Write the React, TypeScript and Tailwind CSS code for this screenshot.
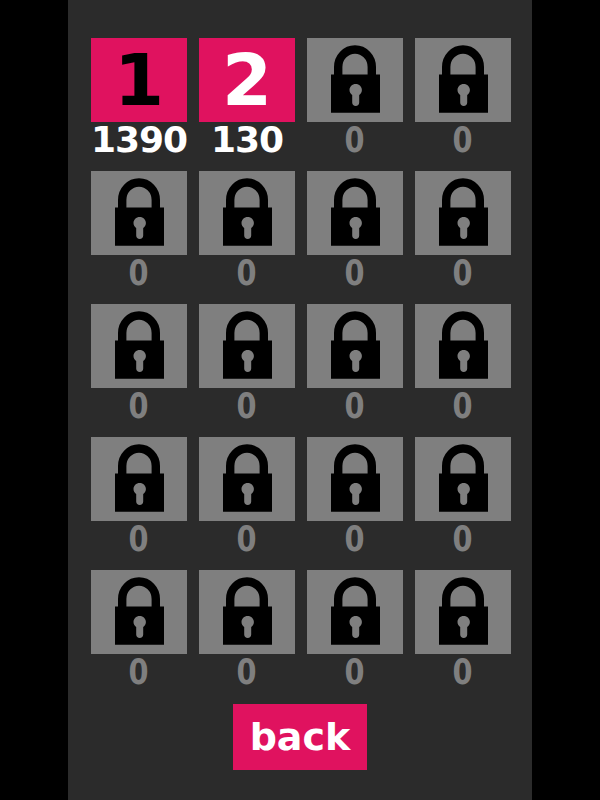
const LEVEL_COUNT = 20;

const unlocked: Record<number, { score: string; numberClass: string }> = {
  1: { score: '1390', numberClass: 'text-black' },
  2: { score: '130', numberClass: 'text-white' }
};

function LockIcon() {
  return (
    <svg className="block h-[84px] w-[96px]" viewBox="0 0 96 84" fill="none">
      <path d="M31.2 38V29A16.8 17.5 0 0 1 64.8 29V38" stroke="#000" strokeWidth="8.4" />
      <path
        fillRule="evenodd"
        clipRule="evenodd"
        fill="#000"
        d="M24 36.5H73V74.7H24ZM48.7 46C45.2 46 42.5 48.7 42.5 52C42.5 54.2 43.5 55.8 45.2 56.9V64.5C45.2 66.7 46.7 68 48.7 68S52.2 66.7 52.2 64.5V56.9C53.9 55.8 54.9 54.2 54.9 52C54.9 48.7 52.2 46 48.7 46Z"
      />
    </svg>
  );
}

function LevelTile({ level }: { level: number }) {
  const info = unlocked[level];

  return (
    <div className="flex h-[133px] flex-col items-center">
      {info ? (
        <div
          className={`flex h-[84px] w-[96px] items-center justify-center bg-[#e0125f] text-[72px] leading-none font-bold ${info.numberClass}`}
        >
          {level}
        </div>
      ) : (
        <div className="h-[84px] w-[96px] bg-[#7f7f7f]">
          <LockIcon />
        </div>
      )}
      {info ? (
        <div className="mt-[5px] h-[26px] text-center text-[36px] leading-[26px] font-bold tracking-[-1px] text-white">
          {info.score}
        </div>
      ) : (
        <div className="mt-[5px] h-[26px] scale-x-[0.8] text-center text-[36px] leading-[26px] font-bold text-[#7f7f7f]">
          0
        </div>
      )}
    </div>
  );
}

export default function App() {
  const levels = Array.from({ length: LEVEL_COUNT }, (_, i) => i + 1);

  return (
    <div className="flex h-[800px] w-[600px] justify-center overflow-hidden bg-black font-['DejaVu_Sans',sans-serif]">
      <div className="flex h-full w-[464px] flex-col items-center bg-[#2b2b2b] pt-[38px]">
        <div className="ml-[2px] grid grid-cols-[repeat(4,96px)] gap-x-3">
          {levels.map((level) => (
            <LevelTile key={level} level={level} />
          ))}
        </div>
        <button
          type="button"
          className="mt-[1px] flex h-[66px] w-[134px] items-center justify-center bg-[#e0125f] text-[38px] leading-none font-bold text-white"
        >
          back
        </button>
      </div>
    </div>
  );
}
